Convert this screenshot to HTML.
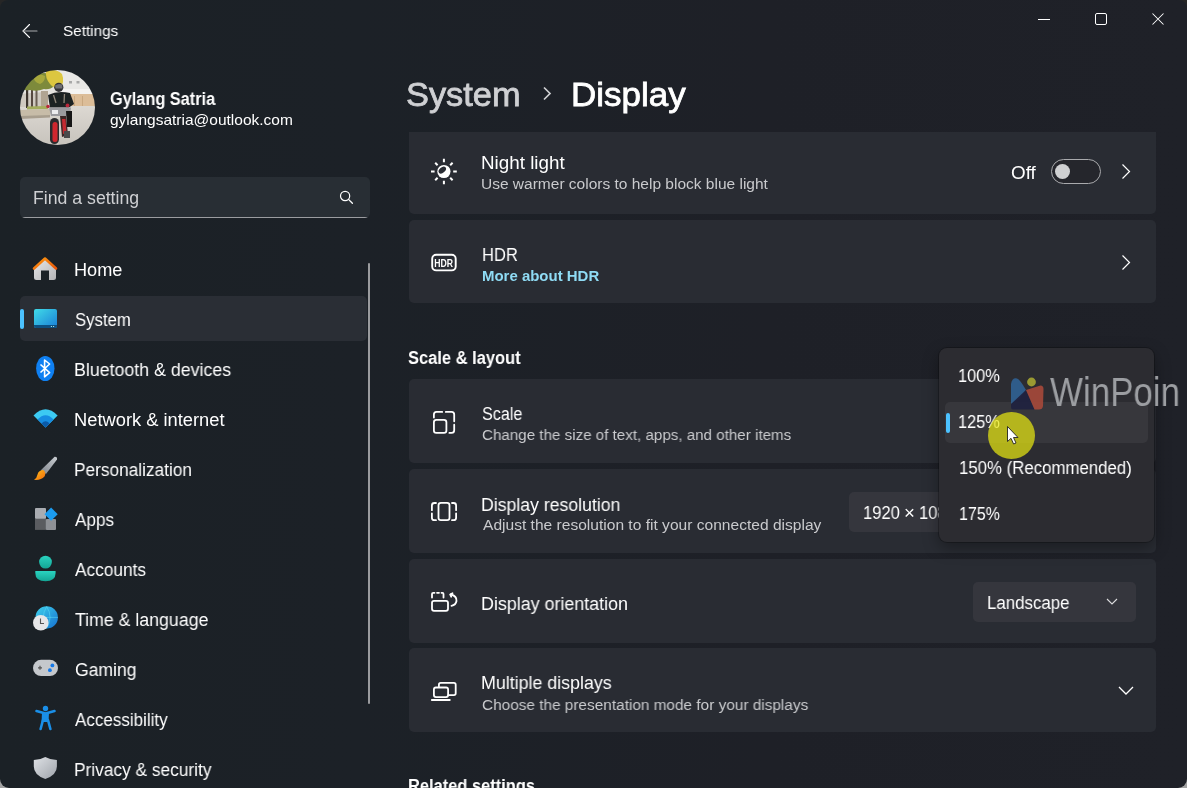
<!DOCTYPE html>
<html><head><meta charset="utf-8">
<style>
*{margin:0;padding:0;box-sizing:border-box}
html,body{width:1187px;height:788px;overflow:hidden;background:linear-gradient(180deg,#262626 0,#262626 50%,#a2a2a2 50%,#a2a2a2 100%)}
body{font-family:"Liberation Sans",sans-serif;color:#fff;position:relative}
.win{position:absolute;left:0;top:0;width:1187px;height:788px;border-radius:8px 8px 9px 9px;overflow:hidden;
 background:linear-gradient(90deg,#1b2126 0%,#1c2127 30%,#1e2027 65%,#1f2128 100%)}
.a{position:absolute;white-space:nowrap;will-change:transform}
.card{position:absolute;left:409px;width:747px;background:#292c33;border-radius:5px}
</style></head><body>
<div class="win">
<svg class="a" style="left:0;top:0" width="1187" height="60" viewBox="0 0 1187 60"><path d="M29.5 24.5 L23 31 L29.5 37.5" stroke="#fff" stroke-width="1.1" fill="none" stroke-linecap="round"/><path d="M23.3 31 H37" stroke="#a9abae" stroke-width="1.1" stroke-linecap="round"/><path d="M1038 19.5 H1050" stroke="#fff" stroke-width="1"/><rect x="1095.5" y="13.5" width="11" height="11" rx="1.5" stroke="#fff" stroke-width="1" fill="none"/><path d="M1152.5 13.5 L1163.5 24.5 M1163.5 13.5 L1152.5 24.5" stroke="#fff" stroke-width="1.05"/></svg><div class="a" style="left:62.71px;top:23px;font-size:15.5px;line-height:1;font-weight:400;color:#fff;transform:scaleX(0.9855);transform-origin:0 0;">Settings</div><svg class="a" style="left:20px;top:70px" width="75" height="75" viewBox="0 0 75 75">
<defs><clipPath id="av"><circle cx="37.5" cy="37.5" r="37.5"/></clipPath>
<filter id="bl" x="-5%" y="-5%" width="110%" height="110%"><feGaussianBlur stdDeviation="0.55"/></filter>
<linearGradient id="road" x1="0" y1="0" x2="0" y2="1"><stop offset="0" stop-color="#dcd8d2"/><stop offset="1" stop-color="#c6c2bb"/></linearGradient></defs>
<g clip-path="url(#av)"><g filter="url(#bl)">
<rect x="-3" y="-3" width="81" height="81" fill="#e4e2de"/>
<rect x="40" y="-3" width="38" height="23" fill="#e9e8e6"/>
<rect x="49" y="11" width="3" height="2.5" fill="#a8a8a8"/><rect x="56.5" y="11" width="3" height="2.5" fill="#a8a8a8"/>
<rect x="42" y="19" width="36" height="5" fill="#f4f3f1"/>
<rect x="48" y="24" width="30" height="13" fill="#dcbd98"/>
<rect x="54" y="26" width="1" height="11" fill="#c9a880"/><rect x="62" y="26" width="1" height="11" fill="#c9a880"/>
<rect x="-3" y="36" width="81" height="42" fill="url(#road)"/>
<path d="M-3 24 L24 22 L24 37 L-3 37 Z" fill="#cfc9c0"/>
<rect x="6" y="14" width="2.2" height="24" fill="#3e352e"/>
<rect x="11" y="17" width="2" height="21" fill="#564a40"/>
<rect x="15.5" y="20" width="2" height="18" fill="#6a5e52"/>
<rect x="21" y="21" width="7" height="16" fill="#b0a492"/>
<path d="M4 12 Q9 5 18 4 Q24 2 30 4 L34 16 Q30 20 24 19 Q17 22 10 20 Q5 21 3 19 Z" fill="#7d8a3a"/>
<path d="M26 1 Q36 -2 42 4 Q45 12 40 19 Q34 19 30 14 Q25 8 26 1 Z" fill="#dcc640"/>
<path d="M14 6 Q20 3 25 6 Q25 12 20 14 Q13 12 14 6Z" fill="#a7a83e"/>
<circle cx="7" cy="13" r="1.6" fill="#c44a50"/>
<path d="M7 36.5 L27 36 L28 39 L7 39.5 Z" fill="#a3ac5c"/>
<path d="M0 40 L30 39 L30 46 L0 47 Z" fill="#c7bca8"/>
<path d="M0 46 L30 45 L30 47.5 L0 49 Z" fill="#a89e8e"/>
<path d="M28 25 Q38 20 50 23 L54 34 L49 37.5 L30 37.5 Z" fill="#1f2023"/>
<circle cx="38.8" cy="17.3" r="4.6" fill="#323236"/>
<path d="M35 15.5 Q38 13 42 14.5 L42.5 18.5 L35.5 18.5 Z" fill="#707074"/>
<path d="M33.5 25 L36 33 M44.5 24 L44 33" stroke="#8c8678" stroke-width="1.3"/>
<circle cx="28" cy="36.5" r="1.8" fill="#b8283a"/>
<circle cx="47.5" cy="35.5" r="1.9" fill="#b8283a"/>
<path d="M29 37.5 H51 L50 46 H31 Z" fill="#9a9a9e"/>
<rect x="32" y="40" width="6" height="4" fill="#ececee"/>
<path d="M46 41 L52 41 L52 57 L47 57 Z" fill="#171719"/>
<rect x="30" y="48" width="9" height="26" rx="4.5" fill="#2c2c2e"/>
<rect x="32.5" y="52" width="5" height="20" rx="2.5" fill="#d0282d"/>
<path d="M40 46 L46 46 L48 65 L42 67 Z" fill="#3a2628"/>
<path d="M42 49 L45.5 49 L46.5 63 L43 64 Z" fill="#c42a30"/>
<path d="M44 61 L50 61 L50 68 L44 68 Z" fill="#4a4a4c"/>
</g></g></svg><div class="a" style="left:109.75px;top:91px;font-size:17.6px;line-height:1;font-weight:700;color:#fff;transform:scaleX(0.9265);transform-origin:0 0;">Gylang Satria</div><div class="a" style="left:109.78px;top:112px;font-size:15px;line-height:1;font-weight:400;color:#fff;transform:scaleX(1.0334);transform-origin:0 0;">gylangsatria@outlook.com</div><div class="a" style="left:20px;top:177px;width:350px;height:41px;background:#282e34;border-radius:5px;overflow:hidden"><div style="position:absolute;left:0;bottom:0;width:100%;height:1px;background:#9b9ca0"></div></div><div class="a" style="left:33.09px;top:190px;font-size:17.5px;line-height:1;font-weight:400;color:#cfd0d3;transform:scaleX(1.0101);transform-origin:0 0;">Find a setting</div><svg class="a" style="left:336px;top:187px" width="20" height="20" viewBox="0 0 20 20"><circle cx="9.1" cy="9" r="4.6" stroke="#fff" stroke-width="1.2" fill="none"/><path d="M12.5 12.4 L16.4 16.3" stroke="#fff" stroke-width="1.3" stroke-linecap="round"/></svg><div class="a" style="left:20px;top:296px;width:347px;height:45px;background:#2a2e35;border-radius:5px"></div><div class="a" style="left:20px;top:309px;width:3.5px;height:20px;background:#4cc2ff;border-radius:2px"></div><div class="a" style="left:74.05px;top:261px;font-size:18px;line-height:1;font-weight:400;color:#fff;transform:scaleX(1.0083);transform-origin:0 0;">Home</div><div class="a" style="left:74.75px;top:311px;font-size:18px;line-height:1;font-weight:400;color:#fff;transform:scaleX(0.9300);transform-origin:0 0;">System</div><div class="a" style="left:74.08px;top:361px;font-size:18px;line-height:1;font-weight:400;color:#fff;transform:scaleX(0.9882);transform-origin:0 0;">Bluetooth &amp; devices</div><div class="a" style="left:74.04px;top:411px;font-size:18px;line-height:1;font-weight:400;color:#fff;transform:scaleX(1.0169);transform-origin:0 0;">Network &amp; internet</div><div class="a" style="left:74.12px;top:461px;font-size:18px;line-height:1;font-weight:400;color:#fff;transform:scaleX(0.9591);transform-origin:0 0;">Personalization</div><div class="a" style="left:75.41px;top:511px;font-size:18px;line-height:1;font-weight:400;color:#fff;transform:scaleX(0.9524);transform-origin:0 0;">Apps</div><div class="a" style="left:75.41px;top:561px;font-size:18px;line-height:1;font-weight:400;color:#fff;transform:scaleX(0.9598);transform-origin:0 0;">Accounts</div><div class="a" style="left:75.15px;top:611px;font-size:18px;line-height:1;font-weight:400;color:#fff;transform:scaleX(0.9852);transform-origin:0 0;">Time &amp; language</div><div class="a" style="left:74.62px;top:661px;font-size:18px;line-height:1;font-weight:400;color:#fff;transform:scaleX(0.9749);transform-origin:0 0;">Gaming</div><div class="a" style="left:75.41px;top:711px;font-size:18px;line-height:1;font-weight:400;color:#fff;transform:scaleX(0.9455);transform-origin:0 0;">Accessibility</div><div class="a" style="left:74.12px;top:761px;font-size:18px;line-height:1;font-weight:400;color:#fff;transform:scaleX(0.9613);transform-origin:0 0;">Privacy &amp; security</div><div class="a" style="left:368px;top:263px;width:2px;height:441px;background:#9a9b9e;border-radius:2px"></div><svg class="a" style="left:0;top:240px" width="80" height="548" viewBox="0 240 80 548">
<defs>
<linearGradient id="hb" x1="0" y1="0" x2="1" y2="1"><stop offset="0" stop-color="#e8e8ea"/><stop offset="1" stop-color="#b4b4b6"/></linearGradient>
<linearGradient id="hr" x1="0" y1="0" x2="1" y2="1"><stop offset="0" stop-color="#ff9a12"/><stop offset="1" stop-color="#e8560a"/></linearGradient>
<linearGradient id="sy" x1="0" y1="0" x2="1" y2="1"><stop offset="0" stop-color="#40dbe8"/><stop offset="1" stop-color="#1a7ed6"/></linearGradient>
<linearGradient id="br" x1="1" y1="0" x2="0" y2="1"><stop offset="0" stop-color="#c9cdd2"/><stop offset="1" stop-color="#7f858c"/></linearGradient>
<linearGradient id="bt" x1="0" y1="0" x2="1" y2="1"><stop offset="0" stop-color="#ffc21a"/><stop offset="1" stop-color="#f26a0c"/></linearGradient>
<linearGradient id="gl" x1="0" y1="0" x2="1" y2="1"><stop offset="0" stop-color="#3fd2ec"/><stop offset="1" stop-color="#1570d0"/></linearGradient>
<linearGradient id="ac" x1="0" y1="0" x2="0" y2="1"><stop offset="0" stop-color="#2ad3c0"/><stop offset="1" stop-color="#14a595"/></linearGradient>
<linearGradient id="sh" x1="0" y1="0" x2="1" y2="1"><stop offset="0" stop-color="#dfe2e6"/><stop offset="1" stop-color="#9ea3aa"/></linearGradient>
</defs>
<!-- home -->
<path d="M34 268.5 V277.5 Q34 280 36.5 280 H41 V270.5 H49 V280 H53.5 Q56 280 56 277.5 V268.5 L45 258.5 Z" fill="url(#hb)"/>
<path d="M34 268.5 L45 258.5 L56 268.5" stroke="url(#hr)" stroke-width="2.6" fill="none" stroke-linecap="round" stroke-linejoin="round"/>
<!-- system -->
<rect x="34" y="309" width="23" height="19" rx="2" fill="url(#sy)"/>
<path d="M34 325 H57 V326 Q57 328 55 328 H36 Q34 328 34 326 Z" fill="#0d4f80"/>
<circle cx="51.4" cy="326.5" r="0.6" fill="#cfe"/><circle cx="53.6" cy="326.5" r="0.6" fill="#cfe"/>
<!-- bluetooth -->
<ellipse cx="45.3" cy="368.5" rx="9.2" ry="12.6" fill="#0f80f2"/>
<path d="M40.5 364.5 L49.6 372.7 L44.6 376.8 V360 L49.6 364 L40.5 372.5" stroke="#fff" stroke-width="1.6" fill="none" stroke-linejoin="round"/>
<!-- network -->
<path d="M33.5 415.5 Q45.6 403 57.6 415.5 L45.6 427.5 Z" fill="#3ccaf2"/>
<path d="M37.5 419.5 Q45.6 411 53.6 419.5 L45.6 427.5 Z" fill="#168de2"/>
<path d="M41.5 423.5 Q45.6 419 49.6 423.5 L45.6 427.5 Z" fill="#0b5aa8"/>
<!-- personalization -->
<path d="M54.6 456.8 Q57.6 456.6 57 459.6 L46 474 L40.8 470.2 Z" fill="url(#br)"/>
<path d="M43.5 470 Q46.5 473 44.5 476.5 Q41 480.5 34 479.8 Q37 478 37.5 474.5 Q38.5 470 43.5 470 Z" fill="url(#bt)"/>
<!-- apps -->
<rect x="35" y="508" width="11" height="11" rx="1" fill="#a9acb1"/>
<rect x="35" y="518.7" width="11" height="11.2" fill="#5a5c60"/>
<rect x="45.8" y="519" width="10.2" height="11" rx="1" fill="#8e9196"/>
<path d="M51.1 507.6 L57.7 514.2 L51.1 520.8 L44.5 514.2 Z" fill="#1b9cf0"/>
<!-- accounts -->
<circle cx="45.5" cy="562.1" r="6.4" fill="url(#ac)"/>
<path d="M35.3 571 H55.6 V573 Q55.6 581.2 45.5 581.2 Q35.3 581.2 35.3 573 Z" fill="url(#ac)"/>
<!-- time -->
<circle cx="46.7" cy="617.4" r="11.2" fill="url(#gl)"/>
<path d="M40 617.4 H58 M46.7 606.5 Q40 617 46.7 628.5 M46.7 606.5 Q53.4 617 46.7 628.5" stroke="#5fe0f5" stroke-width="0.7" fill="none" opacity="0.7"/>
<circle cx="40.8" cy="622.8" r="7.8" fill="#e6e6e8"/>
<path d="M40.5 618.5 V623.5 H44" stroke="#555" stroke-width="1.1" fill="none"/>
<!-- gaming -->
<rect x="33" y="659.8" width="25" height="16.2" rx="8.1" fill="#c5c8cc"/>
<path d="M38 667.8 H42 M40 665.8 V669.8" stroke="#555" stroke-width="1.2"/>
<circle cx="52.4" cy="665.4" r="1.9" fill="#1478e8"/><circle cx="49.9" cy="670.2" r="1.9" fill="#1478e8"/>
<!-- accessibility -->
<circle cx="45.5" cy="708.5" r="2.7" fill="#1a8fe8"/>
<path d="M36.5 711 L45.5 713.5 L54.5 711" stroke="#1a8fe8" stroke-width="2.6" fill="none" stroke-linecap="round" stroke-linejoin="round"/>
<path d="M42 713 H49 L48.5 722 L41.5 722 Z" fill="#1a8fe8"/>
<path d="M43 720 L40.6 729 M48 720 L50.4 729" stroke="#1a8fe8" stroke-width="2.6" stroke-linecap="round"/>
<!-- privacy -->
<path d="M45.3 757 Q50 759.8 56.9 760 V766.5 Q56.9 775 45.3 779 Q33.8 775 33.8 766.5 V760 Q40.6 759.8 45.3 757 Z" fill="url(#sh)"/>
</svg><div class="a" style="left:405.80px;top:77px;font-size:34px;line-height:1;font-weight:400;color:#cfd0d3;transform:scaleX(1.0103);transform-origin:0 0;-webkit-text-stroke:0.8px #cfd0d3;">System</div><svg class="a" style="left:540px;top:84px" width="14" height="20" viewBox="0 0 14 20"><path d="M4 3.5 L10 9.5 L4 15.5" stroke="#cfd0d3" stroke-width="1.7" fill="none"/></svg><div class="a" style="left:570.95px;top:77px;font-size:34px;line-height:1;font-weight:400;color:#ffffff;transform:scaleX(1.0285);transform-origin:0 0;-webkit-text-stroke:0.8px #ffffff;">Display</div>
<div class="a" style="left:0;top:132px;width:1187px;height:656px;overflow:hidden">
<div style="position:absolute;left:0;top:-132px;width:1187px;height:920px">
<div class="card" style="top:127px;height:87px;"></div>
<div class="card" style="top:220px;height:83px;"></div>
<div class="card" style="top:379px;height:84px;"></div>
<div class="card" style="top:469px;height:84px;"></div>
<div class="card" style="top:559px;height:84px;"></div>
<div class="card" style="top:648px;height:84px;"></div>
<div class="a" style="left:481.00px;top:154px;font-size:18px;line-height:1;font-weight:400;color:#fff;transform:scaleX(1.0449);transform-origin:0 0;">Night light</div>
<div class="a" style="left:481.34px;top:176px;font-size:15.5px;line-height:1;font-weight:400;color:#c9cacd;">Use warmer colors to help block blue light</div>
<div class="a" style="left:481.77px;top:246px;font-size:18px;line-height:1;font-weight:400;color:#fff;transform:scaleX(0.9205);transform-origin:0 0;">HDR</div>
<div class="a" style="left:482.13px;top:269px;font-size:14.5px;line-height:1;font-weight:700;color:#8fdbf4;transform:scaleX(1.0320);transform-origin:0 0;">More about HDR</div>
<div class="a" style="left:408.01px;top:349px;font-size:18px;line-height:1;font-weight:700;color:#fff;transform:scaleX(0.9157);transform-origin:0 0;">Scale &amp; layout</div>
<div class="a" style="left:481.97px;top:405px;font-size:18px;line-height:1;font-weight:400;color:#fff;transform:scaleX(0.8967);transform-origin:0 0;">Scale</div>
<div class="a" style="left:481.94px;top:427px;font-size:15.5px;line-height:1;font-weight:400;color:#c9cacd;transform:scaleX(0.9778);transform-origin:0 0;">Change the size of text, apps, and other items</div>
<div class="a" style="left:481.29px;top:496px;font-size:18px;line-height:1;font-weight:400;color:#fff;transform:scaleX(0.9813);transform-origin:0 0;">Display resolution</div>
<div class="a" style="left:482.62px;top:517px;font-size:15.5px;line-height:1;font-weight:400;color:#c9cacd;transform:scaleX(1.0043);transform-origin:0 0;">Adjust the resolution to fit your connected display</div>
<div class="a" style="left:481.27px;top:595px;font-size:18px;line-height:1;font-weight:400;color:#fff;transform:scaleX(0.9928);transform-origin:0 0;">Display orientation</div>
<div class="a" style="left:481.28px;top:674px;font-size:18px;line-height:1;font-weight:400;color:#fff;transform:scaleX(0.9895);transform-origin:0 0;">Multiple displays</div>
<div class="a" style="left:481.93px;top:697px;font-size:15.5px;line-height:1;font-weight:400;color:#c9cacd;transform:scaleX(0.9911);transform-origin:0 0;">Choose the presentation mode for your displays</div>
<div class="a" style="left:407.73px;top:777px;font-size:18px;line-height:1;font-weight:700;color:#fff;transform:scaleX(0.9135);transform-origin:0 0;">Related settings</div>
<div class="a" style="left:1010.55px;top:164px;font-size:18px;line-height:1;font-weight:400;color:#fff;transform:scaleX(1.0458);transform-origin:0 0;">Off</div>
<div class="a" style="left:1051px;top:159px;width:50px;height:25px;border:1px solid #a9aaad;border-radius:12.5px;background:#25262c"></div>
<div class="a" style="left:1055px;top:164px;width:15px;height:15px;border-radius:50%;background:#cfd0d2"></div>
<svg class="a" style="left:1118px;top:162px" width="16" height="20" viewBox="0 0 16 20"><path d="M4.5 2.5 L11.5 9.5 L4.5 16.5" stroke="#fff" stroke-width="1.2" fill="none"/></svg>
<svg class="a" style="left:1118px;top:253px" width="16" height="20" viewBox="0 0 16 20"><path d="M4.5 2.5 L11.5 9.5 L4.5 16.5" stroke="#fff" stroke-width="1.2" fill="none"/></svg>
<div class="a" style="left:849px;top:492px;width:130px;height:40px;background:#35363d;border-radius:5px"></div>
<div class="a" style="left:862.66px;top:504px;font-size:18px;line-height:1;font-weight:400;color:#fff;transform:scaleX(0.9215);transform-origin:0 0;">1920</div>
<div class="a" style="left:904.49px;top:504px;font-size:18px;line-height:1;font-weight:400;color:#fff;transform:scaleX(1.0362);transform-origin:0 0;">×</div>
<div class="a" style="left:918.96px;top:504px;font-size:18px;line-height:1;font-weight:400;color:#fff;transform:scaleX(0.9215);transform-origin:0 0;">1080</div>
<div class="a" style="left:973px;top:582px;width:163px;height:40px;background:#35363d;border-radius:5px"></div>
<div class="a" style="left:987.45px;top:594px;font-size:18px;line-height:1;font-weight:400;color:#fff;transform:scaleX(0.9374);transform-origin:0 0;">Landscape</div>
<svg class="a" style="left:1104px;top:595px" width="16" height="14" viewBox="0 0 16 14"><path d="M3 4 L8 9 L13 4" stroke="#dcdcde" stroke-width="1.1" fill="none"/></svg>
<svg class="a" style="left:1116px;top:682px" width="20" height="18" viewBox="0 0 20 18"><path d="M3 5 L10 12 L17 5" stroke="#fff" stroke-width="1.3" fill="none"/></svg>
<svg class="a" style="left:420px;top:140px" width="50" height="580" viewBox="420 140 50 580" fill="none" stroke="#fff">
<!-- sun -->
<circle cx="443.9" cy="171.5" r="6.6" fill="#fff" stroke="none"/>
<ellipse cx="442.3" cy="170.1" rx="4.3" ry="2.7" transform="rotate(-42 442.3 170.1)" fill="#292c33" stroke="none"/>
<g stroke-width="2" stroke-linecap="butt">
<path d="M443.9 158.8 V162.2 M443.9 180.8 V184.2 M431 171.5 H434.6 M453.2 171.5 H456.8 M435.2 162.8 L437.6 165.2 M450.2 177.8 L452.6 180.2 M452.6 162.8 L450.2 165.2 M437.6 177.8 L435.2 180.2"/>
</g>
<!-- hdr -->
<rect x="432.2" y="254.8" width="23.5" height="15.6" rx="4" stroke-width="1.9"/>
<text x="434.2" y="266.8" font-family="Liberation Sans" font-weight="700" font-size="11.6" fill="#fff" stroke="none" textLength="18.8" lengthAdjust="spacingAndGlyphs">HDR</text>
<!-- scale -->
<g stroke-width="1.8" stroke-linecap="round">
<path d="M433.9 417.6 V414.5 Q433.9 411.9 436.5 411.9 H442.2 M445.8 411.9 H451.6 Q454.2 411.9 454.2 414.5 V421.3 M454.2 424.7 V430.3 Q454.2 432.9 451.6 432.9 H449.4"/>
<rect x="433.9" y="419.8" width="12.5" height="13.1" rx="2.4"/>
<!-- resolution -->
<rect x="438.5" y="502.9" width="11" height="17.3" rx="2.4"/>
<path d="M436 503 H434.4 Q431.9 503 431.9 505.5 V510.2 M431.9 513.3 V517.7 Q431.9 520.2 434.4 520.2 H436 M452 503 H453.6 Q456.1 503 456.1 505.5 V510.2 M456.1 513.3 V517.7 Q456.1 520.2 453.6 520.2 H452"/>
<!-- orientation -->
<rect x="432" y="600.8" width="16" height="10" rx="2"/>
<path d="M432 597.5 V594 Q432 592.8 433.2 592.8 H434.5 M437 592.8 H439 M441.5 592.8 H442.5 Q443.5 592.8 443.5 594 V597.5" stroke-dasharray="none"/>
<path d="M450.7 594.5 Q457 596 456.5 601 Q455.8 605 451.5 605.8"/>
<path d="M450.2 594.5 L452.5 593.2 M450.2 594.5 L451.2 596.7"/>
<!-- multiple -->
<path d="M438.9 686.6 V684.7 Q438.9 682.9 440.7 682.9 H453.9 Q455.7 682.9 455.7 684.7 V693.3 Q455.7 695.1 453.9 695.1 H448.3"/>
<rect x="433.9" y="687.5" width="14.2" height="9.6" rx="2"/>
<path d="M431.8 700 H449.8"/>
</g>
</svg>
</div></div>
<div class="a" style="left:939px;top:348px;width:215px;height:194px;background:#2c2c31;border-radius:8px;box-shadow:0 0 0 1px rgba(0,0,0,.25),0 6px 16px rgba(0,0,0,.35)"></div>
<div class="a" style="left:945px;top:402px;width:203px;height:41px;background:#37373c;border-radius:5px"></div>
<div class="a" style="left:946px;top:413px;width:3.5px;height:20px;background:#4cc2ff;border-radius:2px"></div>
<div class="a" style="left:958.47px;top:367px;font-size:18px;line-height:1;font-weight:400;color:#fff;transform:scaleX(0.9093);transform-origin:0 0;">100%</div>
<div class="a" style="left:958.47px;top:413px;font-size:18px;line-height:1;font-weight:400;color:#fff;transform:scaleX(0.9093);transform-origin:0 0;">125%</div>
<div class="a" style="left:959.14px;top:459px;font-size:18px;line-height:1;font-weight:400;color:#fff;transform:scaleX(0.9337);transform-origin:0 0;">150% (Recommended)</div>
<div class="a" style="left:959.20px;top:505px;font-size:18px;line-height:1;font-weight:400;color:#fff;transform:scaleX(0.8889);transform-origin:0 0;">175%</div>
<svg class="a" style="left:1005px;top:370px" width="45" height="45" viewBox="1005 370 45 45">
<path d="M1011 384 Q1012 377.5 1017 378.5 Q1020 379.5 1026 390 L1019.5 399 L1011 404 Z" fill="#2f5f8f" opacity="0.95"/>
<path d="M1011 404 L1026 390 L1034.5 409.5 L1013 409.5 Q1011 409.5 1011 407 Z" fill="#20223f" opacity="0.95"/>
<path d="M1026 390 L1040.5 385.5 Q1043.5 385.5 1043.5 389 L1043 406 Q1042.5 410 1038 409.5 L1034.5 409.5 Z" fill="#a1483a" opacity="0.95"/>
<circle cx="1031.5" cy="382" r="4.4" fill="#9a9a32"/>
</svg>
<div class="a" style="left:1049.83px;top:372px;font-size:40px;line-height:1;font-weight:400;color:#9c9ea2;transform:scaleX(0.8728);transform-origin:0 0;">WinPoin</div>
<div class="a" style="left:987.6px;top:411.5px;width:46.8px;height:46.8px;border-radius:50%;background:rgba(230,230,18,.72)"></div>
<svg class="a" style="left:1005px;top:424px" width="16" height="24" viewBox="0 0 16 24"><path d="M2.5 2.5 V17.5 L6 14.3 L8.6 20 L11 19 L8.5 13.5 H13 Z" fill="#fff" stroke="#222" stroke-width="0.9" stroke-linejoin="round"/></svg>
</div>
</body></html>
